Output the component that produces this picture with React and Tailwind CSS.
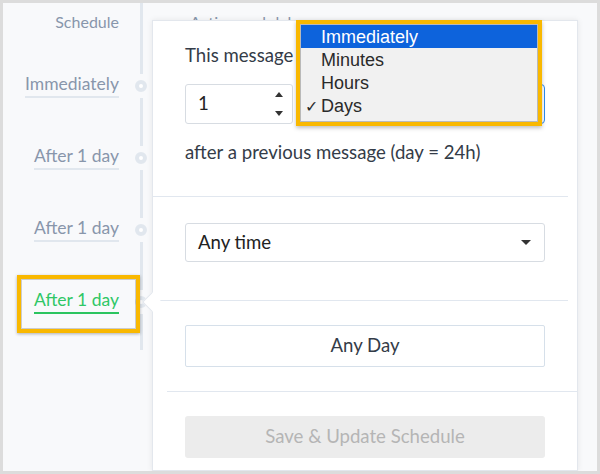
import React from 'react';

const rows = [
    { label: 'Immediately' },
    { label: 'After 1 day' },
    { label: 'After 1 day' },
    { label: 'After 1 day', active: true },
];

function Line({ className = '' }) {
    return <div className={`w-[3px] bg-[#e1e7ee] ${className}`} />;
}

function TimelineRow({ label, active }) {
    return (
        <div className="relative h-[72px] flex items-stretch">
            <div className="flex-1 flex items-center justify-end">
                <span
                    className={`text-[17.5px] leading-[20px] pb-[2px] border-b-2 ${
                        active ? 'text-[#2fc766] border-[#2bc45f]' : 'text-[#8896ab] border-[#e1e7ee]'
                    }`}
                >
                    {label}
                </span>
            </div>
            <div className="ml-[16px] mr-[5px] w-[12px] flex flex-col items-center">
                <Line className="flex-1" />
                <div className="h-[6px]" />
                <div className="w-[12px] h-[12px] rounded-full border-4 border-[#e1e7ee] bg-white" />
                <div className="h-[6px]" />
                <Line className="flex-1" />
            </div>
            {active && (
                <div className="absolute left-[14px] top-[9px] w-[123px] h-[58px] border-4 border-[#f9b800] shadow-[inset_0_0_0_1px_rgba(0,0,0,0.18),0_1px_3px_rgba(0,0,0,0.3)]" />
            )}
        </div>
    );
}

function Sidebar() {
    return (
        <div className="w-[149px] shrink-0 flex flex-col">
            <div className="h-[47px] flex">
                <div className="flex-1 text-right pt-[9px] text-[16px] leading-[20px] text-[#8896ab]">Schedule</div>
                <div className="ml-[16px] mr-[5px] w-[12px] flex justify-center">
                    <Line />
                </div>
            </div>
            {rows.map((r, i) => (
                <TimelineRow key={i} {...r} />
            ))}
            <div className="h-[12px] flex">
                <div className="flex-1" />
                <div className="ml-[16px] mr-[5px] w-[12px] flex justify-center">
                    <Line />
                </div>
            </div>
        </div>
    );
}

function UnitMenu() {
    const items = ['Immediately', 'Minutes', 'Hours', 'Days'];
    return (
        <div className="absolute left-[143px] top-[-1px] w-[246px] h-[106px] border-4 border-[#f9b800] shadow-[0_2px_4px_rgba(0,0,0,0.25)] z-20">
            <div className="h-full border border-[#b9b9b9] bg-[#f1f1f1] font-['Liberation_Sans',Arial,sans-serif] text-[18px] text-[#2a2a2a]">
                {items.map((it, i) => (
                    <div
                        key={it}
                        className={`h-[23px] flex items-center ${i === 0 ? 'bg-[#0d63dc] text-white' : ''}`}
                    >
                        <span className="w-[20px] pt-[2px] pl-[4px] text-[16px]">{it === 'Days' ? '✓' : ''}</span>
                        <span className="pt-[2px] leading-[21px]">{it}</span>
                    </div>
                ))}
            </div>
        </div>
    );
}

function Divider({ className = '' }) {
    return <div className={`h-px bg-[#e1e7ef] ${className}`} />;
}

function Panel() {
    return (
        <div className="relative z-10 flex-1 bg-white border border-[#e3e7ed] shadow-[0_0_6px_rgba(0,0,0,0.08)] text-[18.6px]">
            <div className="absolute left-[-8px] top-[274px] w-[14px] h-[14px] rotate-45 bg-white border-l border-b border-[#e3e7ed]" />

            <div className="px-[32px] pt-[24px] pb-[34px]">
                <p className="leading-[20px] text-[#343c48] whitespace-nowrap">This message</p>
                <div className="mt-[19px] flex gap-[8px]">
                    <div className="w-[108px] h-[40px] border border-[#d7dce2] rounded-[3px] flex items-center justify-between pl-[12px] pr-[9px]">
                        <span className="text-[#222]">1</span>
                        <div className="flex flex-col gap-[14px]">
                            <svg width="8" height="5" viewBox="0 0 8 5"><path d="M4 0L8 5H0z" fill="#333" /></svg>
                            <svg width="8" height="5" viewBox="0 0 8 5"><path d="M0 0H8L4 5z" fill="#333" /></svg>
                        </div>
                    </div>
                    <div className="w-[244px] h-[40px] border-[1.5px] border-[#2d8cf0] rounded-[4px]" />
                </div>
                <p className="mt-[18px] leading-[20px] text-[#343c48] whitespace-nowrap">after a previous message (day = 24h)</p>
            </div>
            <Divider className="mr-[9px]" />

            <div className="px-[32px] pt-[26px] pb-[38px]">
                <div className="h-[39px] border border-[#d7dce2] rounded-[3px] flex items-center justify-between pl-[12px] pr-[13px]">
                    <span className="text-[#222]">Any time</span>
                    <svg width="10" height="5" viewBox="0 0 10 5"><path d="M0 0H10L5 5z" fill="#333" /></svg>
                </div>
            </div>
            <Divider className="mr-[9px]" />

            <div className="px-[32px] py-[24px]">
                <button className="w-full h-[42px] border border-[#d6e0ea] rounded-[2px] text-[#343c48]">
                    Any Day
                </button>
            </div>
            <Divider className="ml-[14px]" />

            <div className="px-[32px] pt-[24px]">
                <button className="w-full h-[42px] bg-[#ececec] rounded-[3px] text-[#b5b5b5]">
                    Save &amp; Update Schedule
                </button>
            </div>

            <UnitMenu />
        </div>
    );
}

export default function App() {
    return (
        <div className="w-[600px] h-[474px] overflow-hidden border-[3px] border-[#dcdcdc] bg-[#f8f9fb] flex font-['Lato',sans-serif]">
            <Sidebar />
            <div className="w-[426px] shrink-0 flex flex-col">
                <div className="h-[17px] pl-[38px] pt-[9px] text-[16px] leading-[20px] text-[#8896ab] whitespace-nowrap">
                    Action and delay
                </div>
                <Panel />
            </div>
            <div className="flex-1" />
        </div>
    );
}
